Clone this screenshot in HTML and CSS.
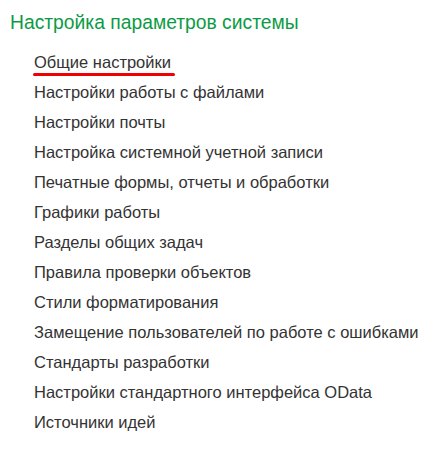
FILE: index.html
```html
<!DOCTYPE html>
<html lang="ru">
<head>
<meta charset="utf-8">
<link rel="stylesheet" href="styles.css">
</head>
<body>
<div class="panel">
  <h1 class="title">Настройка параметров системы</h1>
  <ul class="items">
    <li class="item"><span class="marked">Общие настройки</span></li>
    <li class="item">Настройки работы с файлами</li>
    <li class="item">Настройки почты</li>
    <li class="item">Настройка системной учетной записи</li>
    <li class="item">Печатные формы, отчеты и обработки</li>
    <li class="item">Графики работы</li>
    <li class="item">Разделы общих задач</li>
    <li class="item">Правила проверки объектов</li>
    <li class="item">Стили форматирования</li>
    <li class="item">Замещение пользователей по работе с ошибками</li>
    <li class="item">Стандарты разработки</li>
    <li class="item">Настройки стандартного интерфейса OData</li>
    <li class="item">Источники идей</li>
  </ul>
</div>
</body>
</html>
```
FILE: styles.css
```css
html, body {
  margin: 0;
  padding: 0;
  background: #ffffff;
}
.panel {
  font-family: "Liberation Sans", Arial, sans-serif;
  padding: 11px 0 0 10px;
}
.title {
  margin: 0;
  font-size: 19.3px;
  font-weight: normal;
  line-height: 24px;
  color: #0c9b45;
}
.items {
  list-style: none;
  margin: 0;
  padding: 12px 0 0 24px;
}
.item {
  font-size: 16.5px;
  line-height: 30px;
  height: 30px;
  color: #333333;
}
.marked {
  position: relative;
}
.marked::after {
  content: "";
  position: absolute;
  left: -1px;
  right: -4px;
  bottom: -5px;
  height: 3px;
  border-radius: 2px;
  background: #f00000;
}
```
